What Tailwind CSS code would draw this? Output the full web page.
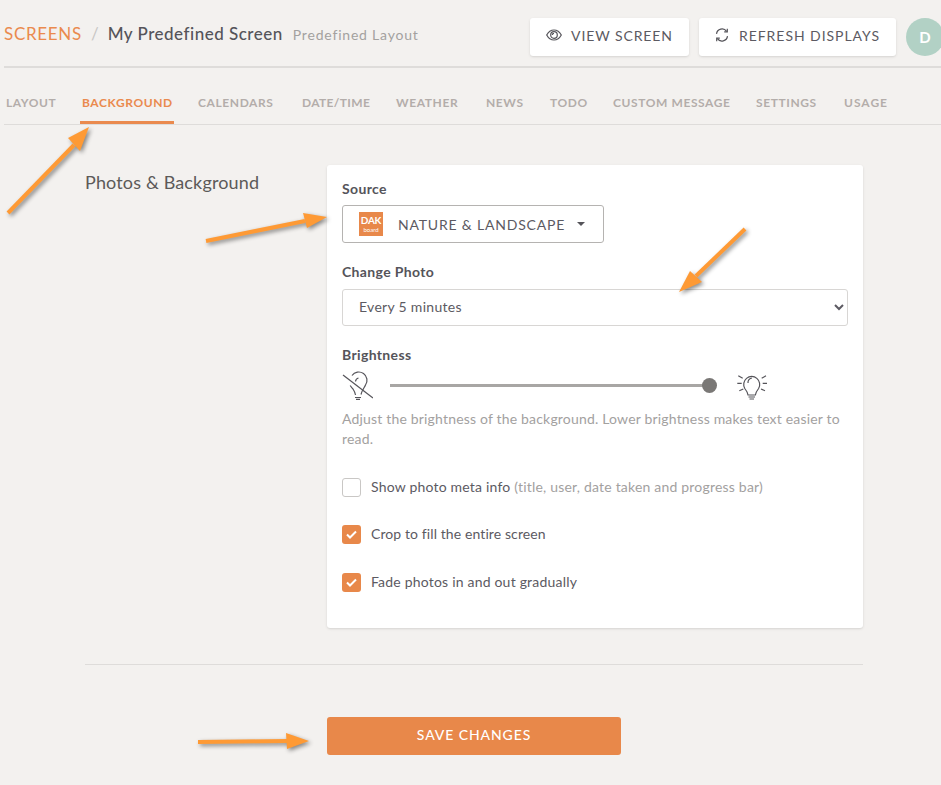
<!DOCTYPE html>
<html>
  <head>
    <meta charset="UTF-8" />
    <script src="https://cdn.jsdelivr.net/npm/@tailwindcss/browser@4"></script>
    <title>My Predefined Screen</title>
  </head>
  <body class="relative overflow-hidden w-[941px] h-[785px] bg-[#f3f1ef] text-[#5c5a59] font-['Lato','Noto_Sans',sans-serif]">
    <div class="ml-1 w-[940px] h-[68px] pt-[18px] flex justify-between border-b-2 border-[#dedcda]">
      <div class="flex items-baseline h-[30px] pt-[3px]">
        <a class="text-[17px] tracking-[0.7px] text-[#ea8a4e]">SCREENS</a>
        <span class="ml-[9px] text-[17px] text-[#c9c7c5]">/</span>
        <span class="ml-[9px] text-[17px] font-medium tracking-[0.5px] text-[#55545a]">My Predefined Screen</span>
        <span class="ml-[10px] text-[14px] tracking-[0.8px] text-[#a3a19f]">Predefined Layout</span>
      </div>
      <div class="flex gap-[10px]">
        <button class="w-[159px] h-[38px] pb-1 flex items-center justify-center gap-[9px] bg-white rounded-[3px] shadow-sm text-[14px] tracking-[0.9px] text-[#5c5a62]">
          <svg width="16" height="12" viewBox="0 0 16 12" fill="none" stroke="#55545a" stroke-width="1.2"><path d="M.7 6C2.4 2.8 5 1 8 1s5.600 1.800 7.300 5c-1.700 3.200-4.300 5-7.300 5S2.400 9.200.7 6z"/><circle cx="8" cy="6" r="3.300"/><path d="M6.300 6A1.700 1.700 0 0 1 8 4.300"/></svg>
          VIEW SCREEN
        </button>
        <button class="w-[197px] h-[38px] pb-1 flex items-center justify-center gap-[10px] bg-white rounded-[3px] shadow-sm text-[14px] tracking-[0.95px] text-[#5c5a62]">
          <svg width="14" height="14" viewBox="0 0 14 14" fill="none" stroke="#55545a" stroke-width="1.200"><path d="M1.500 5.800A5.600 5.600 0 0 1 11.600 3.300M12.500 8.200A5.600 5.600 0 0 1 2.400 10.700"/><path d="M12.300.8v3.100H9.200M1.700 13.200v-3.100h3.100"/></svg>
          REFRESH DISPLAYS
        </button>
        <div class="w-[38px] h-[38px] shrink-0 rounded-full bg-[#b2d1c5] text-white text-[15px] font-bold flex items-center justify-center">D</div>
      </div>
    </div>

    <nav class="ml-1 h-[57px] flex items-end gap-[22px] border-b border-[#dedcda] text-[12px] font-bold tracking-[0.6px] text-[#b3adaa]">
      <a class="w-[54px] h-[32px] pt-[2px] pl-[2px] whitespace-nowrap">LAYOUT</a>
      <a class="w-[94px] h-[32px] pt-[2px] pl-[2px] whitespace-nowrap border-b-[3px] border-[#ea8a4e] text-[#ea8a4e]">BACKGROUND</a>
      <a class="w-[82px] h-[32px] pt-[2px] pl-[2px] whitespace-nowrap">CALENDARS</a>
      <a class="w-[72px] h-[32px] pt-[2px] pl-[2px] whitespace-nowrap tracking-[0.35px]">DATE/TIME</a>
      <a class="w-[68px] h-[32px] pt-[2px] pl-[2px] whitespace-nowrap">WEATHER</a>
      <a class="w-[42px] h-[32px] pt-[2px] pl-[2px] whitespace-nowrap">NEWS</a>
      <a class="w-[41px] h-[32px] pt-[2px] pl-[2px] whitespace-nowrap">TODO</a>
      <a class="w-[121px] h-[32px] pt-[2px] pl-[2px] whitespace-nowrap">CUSTOM MESSAGE</a>
      <a class="w-[66px] h-[32px] pt-[2px] pl-[2px] whitespace-nowrap">SETTINGS</a>
      <a class="w-[47px] h-[32px] pt-[2px] pl-[2px] whitespace-nowrap tracking-[1px]">USAGE</a>
    </nav>

    <main class="ml-[85px] w-[778px] pt-10">
      <div class="flex">
        <h2 class="w-[242px] pt-[5px] text-[18px] leading-6 tracking-[0.15px] text-[#5c5a59]">Photos &amp; Background</h2>
        <section class="w-[536px] h-[463px] bg-white rounded-[3px] shadow-sm px-[15px] pt-[15px]">
          <label class="block text-[14px] leading-[18px] font-bold tracking-[0.35px] text-[#55545a]">Source</label>
          <button class="mt-[7px] w-[262px] h-[38px] flex items-center pl-[16px] bg-white border border-[#b5b3b1] rounded-[3px] text-[14px] tracking-[0.8px] text-[#5c5a62]">
            <span class="w-6 h-6 shrink-0 bg-[#e8884a] text-white flex flex-col items-center justify-center">
              <span class="text-[10px] font-bold tracking-[-0.3px] leading-[12px]">DAK</span>
              <span class="text-[6px] leading-[8px] tracking-normal">board</span>
            </span>
            <span class="ml-[15px] whitespace-nowrap">NATURE &amp; LANDSCAPE</span>
            <span class="ml-[12px] w-0 h-0 border-x-4 border-x-transparent border-t-4 border-t-[#55545a]"></span>
          </button>

          <label class="block mt-5 text-[14px] leading-[18px] font-bold tracking-[0.35px] text-[#55545a]">Change Photo</label>
          <select class="mt-2 block w-[506px] h-[37px] pl-3 pb-[2px] bg-white border border-[#d8d6d4] rounded-[3px] text-[14px] tracking-[0.3px] text-[#5c5a62]">
            <option>Every 5 minutes</option>
          </select>

          <label class="block mt-5 text-[14px] leading-[18px] font-bold tracking-[0.35px] text-[#55545a]">Brightness</label>
          <div class="mt-[6px] h-[30px] flex items-center">
            <svg width="31" height="30" viewBox="0 0 31 30" fill="none" stroke="#55545a" stroke-width="1.200">
              <path d="M1 5l30 23"/>
              <path d="M10 5.500A8 8 0 0 1 23.500 15c-1 2.500-3.500 5-4.500 9.500M13.500 25c-.5-3-1.500-4.500-2.500-6-1.200-1.400-2.200-2.400-2.800-3.500"/>
              <path d="M13.500 11.500a4 4 0 0 1 3-3.500"/>
              <path d="M13 27.500h6M14 29.300h4"/>
            </svg>
            <div class="ml-[17px] w-[320px] h-[3px] bg-[#a8a6a4] relative">
              <span class="absolute -right-[7px] -top-[6px] w-[15px] h-[15px] rounded-full bg-[#7a7876]"></span>
            </div>
            <svg class="ml-[27px]" width="30" height="30" viewBox="0 0 30 30" fill="none" stroke="#55545a" stroke-width="1.200">
              <path d="M11 25c-.5-3-2-5-3.200-6.500a8 8 0 1 1 13.800 0c-1.200 1.500-2.700 3.500-3.200 6.500z"/>
              <path d="M11 13a4.500 4.500 0 0 1 4-5"/>
              <path d="M11.500 27h6.500M12.500 29h4.500"/>
              <path d="M.3 13.300h4.400M25.700 13.300H30M1.300 5.700l4.400 2.600M29 5.700l-4.300 2.600M2.300 20.700l4-1.700M28 20.700l-4-1.700"/>
            </svg>
          </div>
          <p class="mt-[9px] text-[14px] leading-5 tracking-[0.18px] text-[#a3a19f]">Adjust the brightness of the background. Lower brightness makes text easier to read.</p>

          <div class="mt-[29px] flex items-center gap-[10px] h-[19px] text-[14px] tracking-[0.2px] text-[#5c5a62]">
            <span class="w-[19px] h-[19px] bg-white border border-[#c9c7c5] rounded-[3px]"></span>
            <span class="pb-[2px]">Show photo meta info <span class="text-[14px] text-[#a3a19f]">(title, user, date taken and progress bar)</span></span>
          </div>
          <div class="mt-[28px] flex items-center gap-[10px] h-[19px] text-[14px] tracking-[0.1px] text-[#5c5a62]">
            <span class="w-[19px] h-[19px] bg-[#e8884a] rounded-[3px] flex items-center justify-center">
              <svg width="11" height="9" viewBox="0 0 11 9" fill="none" stroke="#fff" stroke-width="2"><path d="M1 4.500L4 7.500 10 1.500"/></svg>
            </span>
            <span class="pb-[2px]">Crop to fill the entire screen</span>
          </div>
          <div class="mt-[29px] flex items-center gap-[10px] h-[19px] text-[14px] tracking-[0.2px] text-[#5c5a62]">
            <span class="w-[19px] h-[19px] bg-[#e8884a] rounded-[3px] flex items-center justify-center">
              <svg width="11" height="9" viewBox="0 0 11 9" fill="none" stroke="#fff" stroke-width="2"><path d="M1 4.500L4 7.500 10 1.500"/></svg>
            </span>
            <span class="pb-[2px]">Fade photos in and out gradually</span>
          </div>
        </section>
      </div>

      <hr class="mt-9 border-[#dedcda]" />

      <button class="mt-[52px] ml-[242px] w-[294px] h-[38px] pb-1 block bg-[#e8884a] rounded-[3px] text-white text-[14px] font-medium tracking-[0.9px]">SAVE CHANGES</button>
    </main>

    <!-- annotation arrows sit on top of the page -->
    <svg class="absolute inset-0 pointer-events-none drop-shadow-[2px_2px_2px_rgba(0,0,0,0.45)]" width="941" height="785" fill="#fe9a35" stroke="#fe9a35">
      <path d="M8 213L74 145" stroke-width="4" fill="none"/>
      <polygon stroke="none" points="89,127 68,138 80,151"/>
      <path d="M206 241L305 221" stroke-width="4" fill="none"/>
      <polygon stroke="none" points="327,217 303,213 307,228"/>
      <path d="M745 229L696 276" stroke-width="4" fill="none"/>
      <polygon stroke="none" points="679,292 690,271 702,282"/>
      <path d="M198 742L288 741" stroke-width="4" fill="none"/>
      <polygon stroke="none" points="309,741 286,733 287,749"/>
    </svg>
  </body>
</html>
